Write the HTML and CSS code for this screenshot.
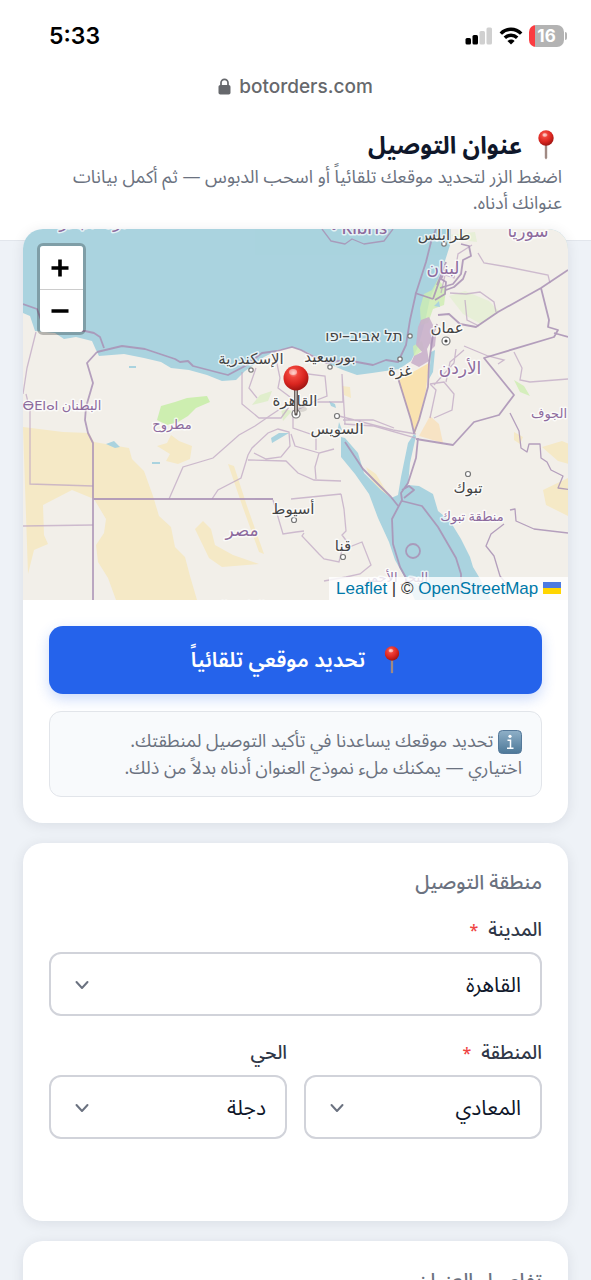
FILE: index.html
```html
<!DOCTYPE html>
<html lang="ar" dir="rtl">
<head>
<meta charset="utf-8">
<meta name="viewport" content="width=device-width, initial-scale=1">
<title>عنوان التوصيل</title>
<link rel="stylesheet" href="styles.css">
</head>
<body>
<svg class="defs" width="0" height="0" aria-hidden="true">
  <defs>
    <radialGradient id="ball" cx="0.4" cy="0.3" r="0.7">
      <stop offset="0" stop-color="#ffb0a6"/><stop offset="0.25" stop-color="#f0453c"/><stop offset="0.65" stop-color="#d9251f"/><stop offset="1" stop-color="#a01512"/>
    </radialGradient>
    <linearGradient id="steel" x1="0" x2="1" y1="0" y2="0">
      <stop offset="0" stop-color="#8d8580"/><stop offset="0.5" stop-color="#c9c3bf"/><stop offset="1" stop-color="#6b6460"/>
    </linearGradient>
    <linearGradient id="infobg" x1="0" x2="0" y1="0" y2="1">
      <stop offset="0" stop-color="#8fb0c8"/><stop offset="1" stop-color="#4d7898"/>
    </linearGradient>
    <symbol id="pin" viewBox="0 0 16 30">
      <path d="M6.800 14h2.400v14L8 29.500 6.800 28z" fill="#a08a84"/>
      <circle cx="8" cy="8" r="7.700" fill="url(#ball)"/>
      <ellipse cx="7" cy="5" rx="2.500" ry="1.800" fill="#fff" opacity="0.45"/>
    </symbol>
  </defs>
</svg>

<div class="browser" dir="ltr">
  <div class="status">
    <span class="clock">5:33</span>
    <div class="indicators">
      <svg width="28" height="18" viewBox="0 0 28 18" aria-hidden="true">
        <rect x="0.500" y="11" width="5.500" height="6.500" rx="1.500"/><rect x="7.500" y="8" width="5.500" height="9.500" rx="1.500"/>
        <rect x="14.500" y="4" width="5.500" height="13.500" rx="1.500" fill="#d0d0d0"/><rect x="21.500" y="0.500" width="5.500" height="17" rx="1.500" fill="#d0d0d0"/>
      </svg>
      <svg width="24" height="18" viewBox="0 0 24 18" aria-hidden="true">
        <path d="M1.800 6.600C7.500.8 16.500.8 22.200 6.600M5.800 10.800c3.500-3.500 8.900-3.500 12.400 0" fill="none" stroke="#000" stroke-width="3.400"/>
        <path d="M12 17.500l-3.600-3.600c2-1.800 5.200-1.800 7.200 0z"/>
      </svg>
      <div class="battery"><span class="level">16</span></div>
    </div>
  </div>
  <div class="address">
    <svg width="13" height="17" viewBox="0 0 13 17" aria-hidden="true"><rect x="0.500" y="7" width="12" height="9.500" rx="1.800" fill="#66686c"/><path d="M3 8V4.800a3.500 3.500 0 0 1 7 0V8" fill="none" stroke="#66686c" stroke-width="1.700"/></svg>
    <span>botorders.com</span>
  </div>
</div>

<header class="intro">
  <h1 class="title"><svg class="title-pin" viewBox="0 0 16 30" aria-hidden="true"><use href="#pin"/></svg>عنوان التوصيل</h1>
  <p class="lead">اضغط الزر لتحديد موقعك تلقائياً أو اسحب الدبوس — ثم أكمل بيانات عنوانك أدناه.</p>
</header>

<main class="content">
  <section class="card map-card">
    <div class="map" dir="ltr">
      <svg class="tiles" viewBox="23 229 545 371" preserveAspectRatio="xMidYMid slice" role="img" aria-label="خريطة مصر">
        <rect x="-400" y="0" width="1400" height="800" fill="#aad3df"/>
        <path fill="#f2efe9" d="M-400 313H23l7 3 3 9 2 6 20 2 9 6 12-2 16 4 4 9 3 6 25-2 20 4 17 4 10 6 18 2 18 5 15 6 14-1 9-9 10-7 9-7 14-7 15-3 14 5 18 10 18 8 14 5 15-2 27-4 12-8 7-14 7-25 5-24 6-13 8-21 7-22V229H1000V800H-400z"/>
        <g fill="#f5e9c6">
          <path d="M23 427l40 5 26 1 5 9 35 6 3 11 12 12 9 25 6 20 12 11 4 20 10 10 5 19 7 24h-81l-8-22-10-16-2-17 8-12 2-14-12-20-22-9-29 15 1 30 4 9-14 6-6 24z"/>
          <path d="M195 529l8-8 8 8 4 16 18 10 26 9-37 3-13-9z"/>
          <path d="M228 464l6 2 13 40 17 48-5-2-17-47z"/>
          <path d="M157 446l10-3 4-8 8 6 13 5-2 13-12 5-12-3 4-7z"/>
          <path d="M398 378l15-6 16-9-3 27-7 30-4 14-5-17z" fill="#f9e2b0"/>
          <path d="M419 436l11-20 9 8 4 19z" fill="#f7e3c4"/>
          <path d="M366 467l10 7 12 20-3 3-13-15zM542 447l20-6 10 4v20l-14-4zM543 490l25-12v38l-22-11zM514 432l9 5-3 7-6-4zM342 386l8 1 1 11-7-3z"/>
        </g>
        <g fill="#cdeeb0">
          <path d="M157 420l4-14 14-4 12-4 20-2 3 6-14 6-8 8-10 6-11 3z"/>
          <path d="M420 308l4-14 8-4 6-11 8 10-2 16-11 4-5 14-7 2zM413 346l9-5 2 8-10 8zM514 380l10 6 6 10-10-4z" opacity="0.8"/>
          <path d="M449 296l16-5 24 10 10 10-18 13-18-10zM450 235l25-3 2 10-16-2z" opacity="0.3"/>
          <path d="M252 405l8-10 12-4-4 10zM281 408l11 3-9 10z" opacity="0.5"/>
        </g>
        <path fill="#c9b0cb" d="M421 320l8-3 4 8-3 18-3 6 2 12-10 6-8-4 3-7 8-4-6-7 2-18zM429 338l7-2-1 10-4 4z" opacity="0.9"/>
        <g fill="#aad3df">
          <path d="M341 437l4 1 13 15 6 20 17 17 10 8 7-3 3-18 7-34 6-9 2 2-6 27-2 22 11 1 14 8 5 17 12 10 11 18 9 18 3 10 6 10 12 23H415l-10-22-10-18-6-18-11-24-9-24-14-20-14-17z"/>
          <path d="M339 422l3 8-5 4zM431 352l4-2-2 22-4 7zM434 306l5-5 1 6zM271 438l8-5 10 0-17 10zM329 401l6 3 1 4-5-2z"/>
          <path d="M106 444l8-3 6 6-5 1zM138 447h4M152 462h8v2h-8zM129 366h7v2h-7z"/>
        </g>
        <g fill="none" stroke="#c0a8c4" stroke-width="1.300" opacity="0.75">
          <path d="M36 332l-4 16-5 20-4 26M26 394l4 16v74l63 2M23 526l70-1M169 499l14-32 30-9 26-23 16-9 16-11 9-6M212 499l6-9 23-12 7-23 4-7 16-15 10-4 11 3 1 14-9 11-15 2-12-6M248 460l38 1 12 12 16 7 27 1M273 500l10 34 13-2 8-1M291 499l50-5M304 533l-2 3 17 18 5 5 15 3 3-12 20-8 9 23-11 9-14 3-22 4M341 494l3 15 2 22-4 4 6 8M316 479l-1-12 4-14 15-4M319 453l-24-7-4-12M339 416l54 14 23 4M316 450v-14l-23-8v-18M343 420h30l21 8"/>
          <path d="M242 372v32l17 14 22 0 8-11M256 368l-7 20 8 10M275 354l5 24-2 10 12 9M300 373l25 3 2 20-10 4-24 12M317 402h26l-1-28 3 50M344 424l30 2 42 12"/>
          <path d="M478 253l6 10 24 4 40 8 2 8M472 245l-14 9-4 24-9-3-4 18M450 293l16 1 14-2 14 10 2 10M465 300l2 20 12 6M464 346l24 10 16 4-6 4M514 352l8 16-2 12 10 2 38-3M430 384l14-2 10 12-2 16-18 8M430 418l6-28-6-6M434 385l20-22 2-14M464 350l-14 12-4 20"/>
        </g>
        <g fill="none" stroke="#a991b5" stroke-width="1.800" opacity="0.85" stroke-linejoin="round">
          <path d="M23 304l14 5 8 22 40 0 9 2 6 4 4 11M97 352l-10 11 6 20-7 24-1 13 3 13 5 10v157M93 499h180M97 352l25-6 23 3 30 10 5 3 8-1 5 5 27 7 8 2 17-9 17-13 15-2 15-4 9 3 25 13 20-3 27 5 13-5 12 2 8-17 4-25 6-27 10-31 5-20 5-13"/>
          <path d="M568 270l-27 18-43 24-22 15-16-3-11-10-11 1M541 288l8 32-1 7 10 3-4 7-70 21 30 37-15 20-25 7-21 23-37-6M554 333l14 4M398 378l13 42 3 13 5-13 9-33 1-24 4-29 4-10M435 300l10-6 1-12-5-3 5-10M415 293l18 6M433 299l7-20M446 290l8-3 9-8 3-8M437 285l9-23"/>
          <path d="M461 244l8 2 2 10-8 4-2 14-8 10-13 4M345 442l18 27 28 28 8 10M418 438l-2 20-8 25-7 10 1 7-10 19 1 25 7 23 10 18M402 501l20 5 16 21 18 31 5 16 0 20M402 490l7-4 5 4-10 8"/>
          <circle cx="413" cy="551" r="7"/>
          <path d="M322 229l9 12 14 3 7-5 12 5 20-3 9-12M510 413l9 18 2 17 6 4 2-8 11 0 1 14 6 4 4 8 12 6-5 12 14 2" stroke-width="1.300"/>
          <path d="M510 510l5-1 1 12 18 8 34 4M504 524l-13 10-5 12 8 10 6 20 8 10" stroke-width="1.300"/>
        </g>
        <g fill="#fff" stroke="#777" stroke-width="1.200"><circle cx="251" cy="370" r="2.200"/><circle cx="330" cy="367" r="2.200"/><circle cx="400" cy="359" r="2.200"/><circle cx="410" cy="336" r="2.200"/><circle cx="444" cy="244" r="2.200"/><circle cx="337" cy="416" r="2.500"/><circle cx="468" cy="474" r="2.500"/><circle cx="294" cy="520" r="2.500"/><circle cx="343" cy="557" r="2.500"/><circle cx="446" cy="341" r="4"/><circle cx="296" cy="414" r="4"/></g>
        <circle cx="446" cy="341" r="1.600" fill="#444"/><circle cx="296" cy="414" r="1.600" fill="#444"/>
        <g class="city">
          <text x="251" y="364">الإسكندرية</text><text x="330" y="362">بورسعيد</text><text x="364" y="341">תל אביב–יפו</text><text x="400" y="376">غزة</text>
          <text x="447" y="333">عمان</text><text x="444" y="240">طرابلس</text><text x="295" y="406">القاهرة</text><text x="337" y="434">السويس</text>
          <text x="468" y="493">تبوك</text><text x="293" y="514">أسيوط</text><text x="343" y="551">قنا</text>
        </g>
        <g class="region">
          <text x="528" y="237" class="country">سوريا</text><text x="443" y="274" class="country">لبنان</text><text x="460" y="374" class="country">الأردن</text><text x="242" y="536" class="country">مصر</text>
          <text x="172" y="429">مطروح</text><text x="62" y="410" class="rtl">البطنان ⴱⴹⵏⴰⵏ</text><text x="549" y="418">الجوف</text><text x="472" y="521">منطقة تبوك</text><text x="396" y="582">البحر الأحمر</text><text x="359" y="234" class="country">• Kıbrıs</text><text x="94" y="228" class="country">درنة البحر</text><text x="230" y="611">الوادي الجديد</text>
        </g>
        <ellipse cx="301" cy="409" rx="6" ry="3" fill="#000" opacity="0.1"/>
        <path d="M294.500 389h3v23l-1.500 3-1.500-3z" fill="url(#steel)" stroke="#554c48" stroke-width="0.800"/>
        <circle cx="296" cy="378" r="12.500" fill="url(#ball)"/>
        <ellipse cx="293" cy="372" rx="4" ry="3" fill="#fff" opacity="0.45"/>
      </svg>
      <div class="zoom">
        <button type="button" class="zoom-btn" aria-label="تكبير"><svg width="18" height="18" viewBox="0 0 18 18" aria-hidden="true"><path d="M0.500 9h17M9 .5v17" stroke="#000" stroke-width="3.600"/></svg></button>
        <button type="button" class="zoom-btn" aria-label="تصغير"><svg width="18" height="18" viewBox="0 0 18 18" aria-hidden="true"><path d="M0.500 9h17" stroke="#000" stroke-width="3.600"/></svg></button>
      </div>
      <div class="credit"><a href="#leaflet">Leaflet</a> | © <a href="#osm">OpenStreetMap</a> <svg width="18" height="12" viewBox="0 0 18 12" aria-hidden="true"><path fill="#4c7be1" d="M0 0h18v7H0z"/><path fill="#ffd500" d="M0 6h18v6H0z"/></svg></div>
    </div>
    <div class="locate">
      <button type="button" class="primary"><svg class="button-pin" viewBox="0 0 16 30" aria-hidden="true"><use href="#pin"/></svg><span>تحديد موقعي تلقائياً</span></button>
      <p class="note"><svg class="info" viewBox="0 0 24 24" aria-hidden="true"><rect x="0.500" y="0.500" width="23" height="23" rx="4" fill="url(#infobg)" stroke="#55799a"/><circle cx="12" cy="6.300" r="1.600" fill="#fff"/><path d="M9.500 10.200h3v8M9 18.300h6.500" fill="none" stroke="#fff" stroke-width="1.500"/></svg> تحديد موقعك يساعدنا في تأكيد التوصيل لمنطقتك.<br>اختياري — يمكنك ملء نموذج العنوان أدناه بدلاً من ذلك.</p>
    </div>
  </section>

  <section class="card form-card">
    <h2 class="section-title">منطقة التوصيل</h2>
    <div class="fields">
      <div class="field wide">
        <label for="city">المدينة <span class="required">*</span></label>
        <div class="picker"><select id="city"><option>القاهرة</option></select><svg class="chevron" viewBox="0 0 14 10" aria-hidden="true"><path d="M1.500 2l5.500 6 5.500-6"/></svg></div>
      </div>
      <div class="field">
        <label for="area">المنطقة <span class="required">*</span></label>
        <div class="picker"><select id="area"><option>المعادي</option></select><svg class="chevron" viewBox="0 0 14 10" aria-hidden="true"><path d="M1.500 2l5.500 6 5.500-6"/></svg></div>
      </div>
      <div class="field">
        <label for="district">الحي</label>
        <div class="picker"><select id="district"><option>دجلة</option></select><svg class="chevron" viewBox="0 0 14 10" aria-hidden="true"><path d="M1.500 2l5.500 6 5.500-6"/></svg></div>
      </div>
    </div>
  </section>

  <section class="card details-card">
    <h2 class="section-title">تفاصيل العنوان</h2>
  </section>
</main>
</body>
</html>
```
FILE: styles.css
```css
* { box-sizing: border-box; }
body {
  margin: 0;
  background: #eef2f7;
  color: #111827;
  font-family: "Noto Sans", "Noto Sans Arabic", "DejaVu Sans", sans-serif;
}
h1, h2, p { margin: 0; }
.defs { position: absolute; }

.browser { background: #fff; font-family: Inter, sans-serif; }
.status { display: flex; justify-content: space-between; align-items: center; height: 72px; padding: 0 27px 0 49px; }
.clock { font-size: 23px; font-weight: 600; color: #000; }
.indicators { display: flex; align-items: center; gap: 6px; }
.battery {
  position: relative;
  display: flex;
  align-items: center;
  justify-content: center;
  width: 35px;
  height: 22px;
  border-radius: 7px;
  background: linear-gradient(90deg, #fa3c41 16%, #b3b3b3 16%);
}
.battery::after { content: ""; position: absolute; left: 36px; top: 7px; width: 2px; height: 8px; border-radius: 0 2px 2px 0; background: #b3b3b3; }
.level { color: #fff; font-size: 17px; font-weight: 700; line-height: 22px; }
.address { display: flex; justify-content: center; align-items: center; gap: 8px; height: 28px; color: #66686c; font-size: 19px; font-weight: 500; }

.intro { padding: 26px 29px 25px; background: #fff; border-bottom: 1px solid #e2e6ec; }
.title { display: flex; align-items: center; gap: 16px; padding-right: 8px; font-size: 24px; line-height: 37px; font-weight: 700; color: #0f172a; }
.title-pin { width: 16px; height: 30px; }
.lead { color: #6b7280; font-size: 18px; line-height: 26px; }

.content { display: flex; flex-direction: column; gap: 20px; margin-top: -12px; padding: 0 23px 20px; }
.card { position: relative; border-radius: 20px; background: #fff; box-shadow: 0 2px 14px rgba(15, 23, 42, 0.09); }
.map-card { overflow: hidden; }
.map { position: relative; height: 371px; }
.tiles { display: block; width: 100%; height: 100%; }
.city text, .region text { font-family: "Noto Sans", "DejaVu Sans", sans-serif; font-size: 15px; font-weight: 500; text-anchor: middle; paint-order: stroke; stroke: #fff; stroke-opacity: 0.7; stroke-width: 3px; stroke-linejoin: round; fill: #444; }
.region text { font-size: 13px; fill: #8d6b9e; }
.region .country { font-size: 17px; }
.region .rtl { direction: rtl; }
.zoom { position: absolute; top: 14px; left: 14px; border: 3px solid rgba(0, 0, 0, 0.25); border-radius: 6px; background-clip: padding-box; overflow: hidden; }
.zoom-btn { display: flex; align-items: center; justify-content: center; width: 43px; height: 43px; padding: 0 3px 0 0; border: 0; background: #fff; }
.zoom-btn + .zoom-btn { border-top: 1px solid #ccc; }
.credit { position: absolute; right: 0; bottom: 0; padding: 0 7px; background: rgba(255, 255, 255, 0.8); color: #333; font-family: "Liberation Sans", sans-serif; font-size: 17px; line-height: 23px; }
.credit a { color: #0078a8; text-decoration: none; }

.locate { display: flex; flex-direction: column; gap: 17px; padding: 26px; }
.primary {
  display: flex;
  align-items: center;
  justify-content: center;
  gap: 19px;
  height: 68px;
  border: 0;
  border-radius: 14px;
  background: #2563eb;
  color: #fff;
  font: 600 21px "Noto Sans", "Noto Sans Arabic", "DejaVu Sans", sans-serif;
  box-shadow: 0 5px 14px rgba(37, 99, 235, 0.24);
}
.button-pin { width: 16px; height: 28px; }
.note { padding: 15px 19px; border: 1px solid #e2e5ea; border-radius: 12px; background: #f8fafc; color: #6b7280; font-size: 18px; line-height: 27px; }
.info { width: 24px; height: 24px; vertical-align: middle; }

.form-card { padding: 26px 26px 82px; }
.section-title { color: #6b7280; font-size: 20px; line-height: 26px; font-weight: 500; }
.fields { display: grid; grid-template-columns: 1fr 1fr; column-gap: 17px; row-gap: 22px; padding-top: 20px; }
.wide { grid-column: 1 / -1; }
.field label { display: block; height: 28px; margin-bottom: 9px; color: #2f3747; font-size: 19px; line-height: 28px; font-weight: 500; }
.required { margin-right: 5px; color: #ef4444; font-size: 16px; }
.picker { position: relative; }
.picker select {
  display: block;
  width: 100%;
  height: 64px;
  padding: 0 19px 0 50px;
  border: 2px solid #d1d3da;
  border-radius: 12px;
  background: #fff;
  color: #0f172a;
  appearance: none;
  font: 400 21px/48px "Noto Sans", "Noto Sans Arabic", "DejaVu Sans", sans-serif;
}
.chevron { position: absolute; left: 26px; top: 28px; width: 14px; height: 10px; fill: none; stroke: #6b7280; stroke-width: 2; stroke-linecap: round; stroke-linejoin: round; pointer-events: none; }
.details-card { padding: 26px; }
```
